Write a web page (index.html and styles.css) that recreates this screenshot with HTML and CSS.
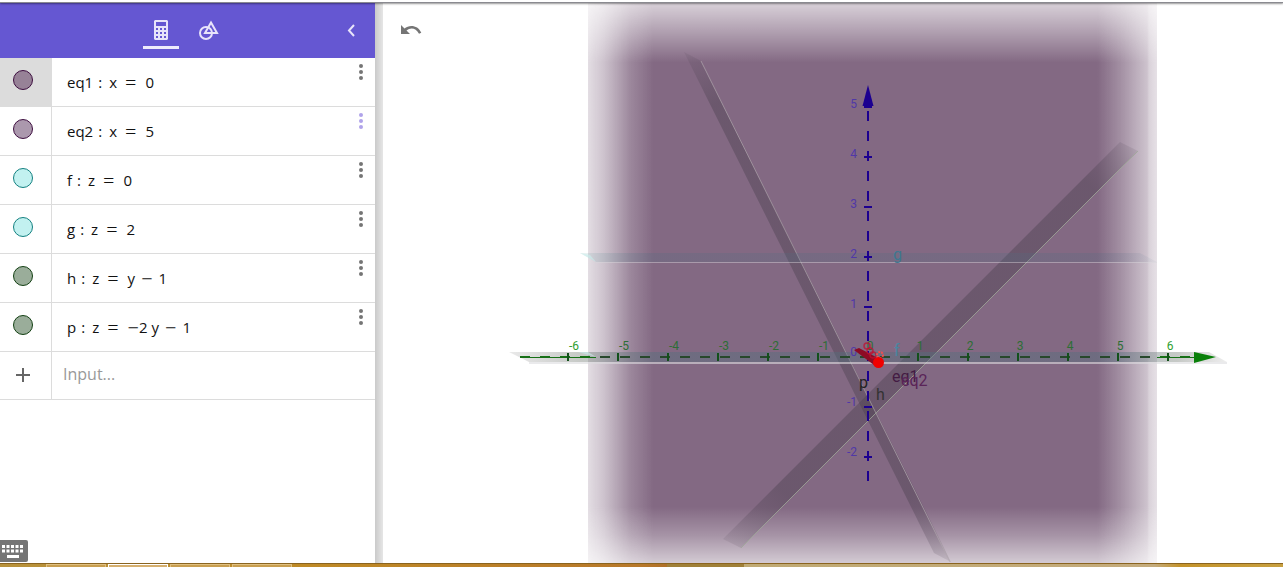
FILE: index.html
```html
<!DOCTYPE html>
<html lang="en">
<head>
    <meta charset="UTF-8">
    <meta name="viewport" content="width=device-width, initial-scale=1.0">
    <title>3D Calculator</title>
    <link rel="stylesheet" href="styles.css">
</head>
<body>
    <div class="top-edge"></div>
    <main class="workspace">
        <section class="sidebar">
            <header class="sidebar-header">
                <nav class="tabs">
                    <button class="tab active" aria-label="Algebra">
                        <svg width="20" height="20" viewBox="0 0 20 20">
                            <path fill="currentColor" fill-rule="evenodd" d="M4 0h12l1 1v18l-1 1H4l-1-1V1zM5 2v4h10V2zM5 8v2h2V8zM9 8v2h2V8zM13 8v2h2V8zM5 12v2h2v-2zM9 12v2h2v-2zM13 12v2h2v-2zM5 16v2h2v-2zM9 16v2h2v-2zM13 16v2h2v-2z"/>
                        </svg>
                    </button>
                    <button class="tab" aria-label="Tools">
                        <svg width="20" height="20" viewBox="0 0 20 20">
                            <g fill="none" stroke="currentColor" stroke-width="2">
                                <circle cx="7" cy="13" r="6"/>
                                <path d="M12 2.5L18 13H6z"/>
                            </g>
                        </svg>
                    </button>
                </nav>
                <button class="collapse" aria-label="Close sidebar">
                    <svg width="24" height="24" viewBox="0 0 24 24">
                        <path fill="none" stroke="currentColor" stroke-width="2" d="M15 6L10 11.500l5 5.500"/>
                    </svg>
                </button>
            </header>

            <ul class="equations" id="equations"></ul>

            <div class="row input-row">
                <button class="marble-cell add" aria-label="Add">
                    <svg width="14" height="14" viewBox="0 0 14 14">
                        <path fill="currentColor" d="M6 0h2v6h6v2H8v6H6V8H0V6h6z"/>
                    </svg>
                </button>
                <input class="new-input" type="text" aria-label="Input" placeholder="Input...">
            </div>

            <button class="keyboard" aria-label="Keyboard">
                <svg width="28" height="22" viewBox="0 0 28 22">
                    <path fill="#757575" d="M0 0h26q2 0 2 2v18q0 2-2 2H0z"/>
                    <path stroke="#fff" stroke-width="3" stroke-dasharray="3 1.500" d="M2 6.500h22M2 11h22"/>
                    <path fill="#fff" d="M7 15h12v3H7z"/>
                </svg>
            </button>
        </section>

        <div class="splitter"></div>

        <section class="graphics">
            <button class="undo" aria-label="Undo">
                <svg width="22" height="12" viewBox="0 0 22 12">
                    <path fill="currentColor" d="M1 0l3.500 3.500C9-.5 18-.2 21.300 7.800l-2.300 1C16 2.800 10.500 2.200 6.500 5.500L10 9H1z"/>
                </svg>
            </button>
            <svg class="view3d" id="view3d" viewBox="383 3 900 560" preserveAspectRatio="xMidYMid slice">
                <defs>
                    <linearGradient id="fadeX">
                        <stop offset="0" stop-color="#836983" stop-opacity=".22"/>
                        <stop offset=".03" stop-color="#836983" stop-opacity=".42"/>
                        <stop offset=".075" stop-color="#836983" stop-opacity=".8"/>
                        <stop offset=".115" stop-color="#836983"/>
                        <stop offset=".895" stop-color="#836983"/>
                        <stop offset=".935" stop-color="#836983" stop-opacity=".75"/>
                        <stop offset=".983" stop-color="#836983" stop-opacity=".4"/>
                        <stop offset=".986" stop-color="#836983" stop-opacity=".3"/>
                        <stop offset="1" stop-color="#836983" stop-opacity=".2"/>
                    </linearGradient>
                    <linearGradient id="fadeY" x2="0" y2="1">
                        <stop offset="0" stop-color="#fff" stop-opacity=".3"/>
                        <stop offset=".06" stop-color="#fff" stop-opacity=".68"/>
                        <stop offset=".108" stop-color="#fff"/>
                        <stop offset=".9" stop-color="#fff"/>
                        <stop offset=".95" stop-color="#fff" stop-opacity=".72"/>
                        <stop offset="1" stop-color="#fff" stop-opacity=".35"/>
                    </linearGradient>
                    <linearGradient id="fadeP" gradientUnits="userSpaceOnUse" x1="692" y1="52" x2="942" y2="562">
                        <stop offset="0" stop-color="#4c4150" stop-opacity=".12"/>
                        <stop offset=".1" stop-color="#4c4150" stop-opacity=".43"/>
                        <stop offset=".87" stop-color="#4c4150" stop-opacity=".43"/>
                        <stop offset="1" stop-color="#4c4150" stop-opacity=".12"/>
                    </linearGradient>
                    <linearGradient id="fadeH" gradientUnits="userSpaceOnUse" x1="1130" y1="146" x2="732" y2="544">
                        <stop offset="0" stop-color="#4c4150" stop-opacity=".12"/>
                        <stop offset=".1" stop-color="#4c4150" stop-opacity=".43"/>
                        <stop offset=".87" stop-color="#4c4150" stop-opacity=".43"/>
                        <stop offset="1" stop-color="#4c4150" stop-opacity=".12"/>
                    </linearGradient>
                    <linearGradient id="fadeZ">
                        <stop offset="0" stop-color="#60a0a0" stop-opacity=".12"/>
                        <stop offset=".12" stop-color="#506c80" stop-opacity=".25"/>
                        <stop offset=".88" stop-color="#506c80" stop-opacity=".25"/>
                        <stop offset="1" stop-color="#50708a" stop-opacity=".05"/>
                    </linearGradient>
                    <linearGradient id="fadeF">
                        <stop offset="0" stop-color="#707070" stop-opacity=".15"/>
                        <stop offset=".1" stop-color="#707870" stop-opacity=".4"/>
                        <stop offset=".2" stop-color="#50707c" stop-opacity=".4"/>
                        <stop offset=".85" stop-color="#50707c" stop-opacity=".4"/>
                        <stop offset=".93" stop-color="#707870" stop-opacity=".4"/>
                        <stop offset="1" stop-color="#707070" stop-opacity=".12"/>
                    </linearGradient>
                    <mask id="maskY">
                        <rect x="588" y="2" width="569" height="561" fill="url(#fadeY)"/>
                    </mask>
                </defs>

                <!-- planes -->
                <rect x="588" y="2" width="569" height="561" fill="url(#fadeX)" mask="url(#maskY)"/>
                <path fill="url(#fadeP)" d="M684 52l17 9 250 501-17-9z"/>
                <path fill="url(#fadeH)" d="M1120 142l18 9-397 397-18-9z"/>
                <path fill="none" stroke="#b0a6ae" stroke-opacity=".7" d="M701 61l249 501"/>
                <path fill="none" stroke="#9fa898" stroke-opacity=".8" d="M1138 151L741 548"/>
                <path fill="url(#fadeZ)" d="M580 253h560l17 9H596z"/>
                <path fill="#c9efed" fill-opacity=".6" d="M580 253l10 2 6 7z"/>
                <path fill="none" stroke="#d8d8dc" stroke-opacity=".45" d="M596 262.500h561"/>
                <path fill="url(#fadeF)" d="M509 352h700l18 10H529z"/>
                <path fill="#c9efed" fill-opacity=".6" d="M578 352l10 0 8 5z"/>
                <path fill="none" stroke="#dcdcdf" stroke-opacity=".6" stroke-width="2" d="M529 363h698"/>

                <!-- horizontal axis -->
                <g stroke="#167016" fill="none">
                    <path stroke-width="1" d="M520 357.500h76M1157 357.500h40"/>
                    <path stroke-width="2" stroke-dasharray="10 10" d="M520 357h70M1160 357h34"/>
                    <path stroke="#27482c" stroke-width="2" stroke-dasharray="10 10" d="M600 357h555"/>
                </g>
                <g id="ticksX" class="ticks-x"></g>
                <path fill="#0a800a" d="M1194 352l22 5-22 6z"/>

                <!-- vertical axis -->
                <path stroke="#1c0090" stroke-width="2" stroke-dasharray="10 10" d="M868 111v370"/>
                <g id="ticksZ" class="ticks-z"></g>
                <path fill="#1c0090" d="M868 85l5.500 21h-11z"/>

                <!-- third axis, pointing at the viewer -->
                <path fill="#8d0b24" d="M854 350l5-2 17 9-2 8z"/>
                <g fill="none" stroke="#c01030" stroke-opacity=".75" stroke-width="1.500">
                    <circle cx="867" cy="346" r="3"/>
                    <circle cx="870" cy="351" r="3"/>
                    <circle cx="873" cy="355" r="3"/>
                </g>
                <circle cx="880" cy="355" r="3" fill="none" stroke="#f05050" stroke-width="2" stroke-dasharray="2 1"/>
                <circle cx="878.500" cy="362.500" r="5.500" fill="#f00000"/>

                <g class="names">
                    <text x="892" y="382" fill="#431b43">eq1</text>
                    <text x="901" y="386" fill="#5a2458">eq2</text>
                    <text x="859" y="388" fill="#222">p</text>
                    <text x="876" y="400" fill="#333">h</text>
                    <text x="893" y="260" fill="#3d7890">g</text>
                    <text x="894" y="356" fill="#4a86a0">f</text>
                </g>
            </svg>
        </section>
    </main>

    <footer class="taskbar">
        <span class="task"></span>
        <span class="task current"></span>
        <span class="task"></span>
        <span class="task"></span>
    </footer>

    <script src="script.js"></script>
</body>
</html>
```
FILE: styles.css
```css
* {
    box-sizing: border-box;
}
body {
    margin: 0;
    min-height: 100vh;
    display: flex;
    flex-direction: column;
    background-color: #fff;
    font-family: "Open Sans", "Noto Sans", sans-serif;
}
button {
    padding: 0;
    border: none;
    background: none;
    cursor: pointer;
}
svg {
    display: block;
}
.top-edge {
    height: 3px;
    border-bottom: 1px solid #8a8a90;
    box-shadow: 0 1px 2px rgba(0, 0, 0, 0.4);
    z-index: 2;
}
.workspace {
    flex: 1;
    display: flex;
}

/* sidebar */
.sidebar {
    flex: 0 0 375px;
    display: flex;
    flex-direction: column;
}
.sidebar-header {
    display: grid;
    grid-template-columns: 1fr auto 1fr;
    align-items: center;
    height: 55px;
    padding-right: 5px;
    background-color: #6557d2;
    color: #e8e4fa;
}
.tabs {
    grid-column: 2;
    display: flex;
}
.tab {
    width: 48px;
    height: 55px;
    display: flex;
    flex-direction: column;
    align-items: center;
    padding-top: 17px;
    color: inherit;
}
.tab.active::after {
    content: "";
    width: 36px;
    height: 3px;
    margin-top: 6px;
    background-color: #eeebfc;
}
.collapse {
    justify-self: end;
    margin-right: 7px;
    color: inherit;
}
.equations {
    margin: 0;
    padding: 0;
    list-style: none;
}
.row {
    display: flex;
    height: 49px;
    border-bottom: 1px solid #dcdcdc;
}
.input-row {
    height: 48px;
}
.marble-cell {
    flex: 0 0 52px;
    display: flex;
    justify-content: center;
    padding: 12px 6px 0 0;
    border-right: 1px solid #dcdcdc;
}
.row.selected .marble-cell {
    background-color: #dcdcdc;
}
.marble {
    width: 20px;
    height: 20px;
    border: 1px solid;
    border-radius: 50%;
}
.marble.gray-plum {
    background-color: #978297;
    border-color: #3e0f40;
}
.marble.plum {
    background-color: #ab98ad;
    border-color: #3e0f40;
}
.marble.aqua {
    background-color: #c2f1f0;
    border-color: #138080;
}
.marble.green {
    background-color: #9aad9a;
    border-color: #134013;
}
.formula {
    flex: 1;
    padding-left: 15px;
    font-size: 15px;
    line-height: 48px;
    color: #111;
}
.formula .colon {
    margin: 0 7px 0 5px;
}
.formula .op {
    font-size: 20px;
    font-weight: 300;
    line-height: 0;
    vertical-align: -2px;
}
.formula .equals {
    margin: 0 9px 0 8px;
}
.formula .minus {
    margin: 0 6px;
}
.formula .factor {
    margin-right: 4px;
}
.more {
    align-self: flex-start;
    margin: 4px 4px 0 0;
    color: #757575;
}
.more.hover {
    color: #b0a3ea;
}
.add {
    padding-top: 16px;
    color: #666;
}
.new-input {
    flex: 1;
    min-width: 0;
    padding: 0 11px 4px;
    border: none;
    outline: none;
    font-family: inherit;
    font-size: 16px;
}
.new-input::placeholder {
    color: #999;
}
.keyboard {
    align-self: flex-start;
    margin: auto 0 1px;
}

/* 3D view */
.splitter {
    flex: 0 0 8px;
    background: linear-gradient(to right, #cacaca, #e6e6e6);
}
.graphics {
    flex: 1;
    min-width: 0;
    position: relative;
}
.undo {
    position: absolute;
    left: 17px;
    top: 22px;
    color: #757575;
}
.view3d {
    width: 100%;
    height: 100%;
    font-family: Roboto, Arial, sans-serif;
    font-size: 12px;
}
.ticks-x line {
    stroke: #12501a;
    stroke-width: 2px;
}
.ticks-x text {
    fill: #2d6e35;
    text-anchor: middle;
}
.ticks-x .outside {
    fill: #30a030;
}
.ticks-z line {
    stroke: #1c0090;
    stroke-width: 2px;
}
.ticks-z text {
    fill: #5038a8;
    text-anchor: end;
}
.names {
    font-size: 16px;
}

/* strip of the desktop taskbar */
.taskbar {
    display: flex;
    gap: 2px;
    height: 4px;
    padding-left: 46px;
    border-top: 1px solid #8a6420;
    background: linear-gradient(to right, #b8923c 0, #bf8a26 24%, #b8782a 50%, #b07028 52%, #a08038 52%, #a08038 58%, #c0aa74 58%, #c4ab7c 90%, #c4932a 92%, #c8a040 100%);
}
.task {
    width: 60px;
    border: 1px solid #e0c080;
    border-bottom: none;
    background-color: #c99f50;
}
.task.current {
    border-color: #fff;
    background-color: #d6b070;
}
```
FILE: script.js
```js
const minus = '<span class="op minus">−</span>';

const equations = [
    { name: 'eq1', left: 'x', right: '0', color: 'gray-plum', selected: true },
    { name: 'eq2', left: 'x', right: '5', color: 'plum', hover: true },
    { name: 'f', left: 'z', right: '0', color: 'aqua' },
    { name: 'g', left: 'z', right: '2', color: 'aqua' },
    { name: 'h', left: 'z', right: `y${minus}1`, color: 'green' },
    { name: 'p', left: 'z', right: `<span class="op">−</span><span class="factor">2</span>y${minus}1`, color: 'green' }
];

document.getElementById('equations').innerHTML = equations.map(eq => `
    <li class="row${eq.selected ? ' selected' : ''}">
        <button class="marble-cell" aria-label="Show or hide ${eq.name}"><span class="marble ${eq.color}"></span></button>
        <div class="formula">${eq.name}<span class="colon">:</span>${eq.left}<span class="op equals">=</span>${eq.right}</div>
        <button class="more${eq.hover ? ' hover' : ''}" aria-label="More">
            <svg width="20" height="20" viewBox="0 0 20 20" fill="currentColor">
                <circle cx="10" cy="4" r="2"/><circle cx="10" cy="10" r="2"/><circle cx="10" cy="16" r="2"/>
            </svg>
        </button>
    </li>`).join('');

// one unit is 50 px, the origin is at 868, 357
const origin = { x: 868, y: 357 };
const unit = 50;

let ticksX = '';
for (let n = -6; n <= 6; n++) {
    const x = origin.x + n * unit;
    if (n !== 0) ticksX += `<line x1="${x}" y1="353" x2="${x}" y2="361"/>`;
    ticksX += `<text x="${x + (n < 0 ? 6 : 2)}" y="350"${Math.abs(n) === 6 ? ' class="outside"' : ''}>${n}</text>`;
}
document.getElementById('ticksX').innerHTML = ticksX;

let ticksZ = '';
for (let n = -2; n <= 5; n++) {
    const y = origin.y - n * unit;
    if (n !== 0) ticksZ += `<line x1="864" y1="${y}" x2="872" y2="${y}"/>`;
    ticksZ += `<text x="857" y="${y + (n < 1 ? -1 : 1)}">${n}</text>`;
}
document.getElementById('ticksZ').innerHTML = ticksZ;
```
